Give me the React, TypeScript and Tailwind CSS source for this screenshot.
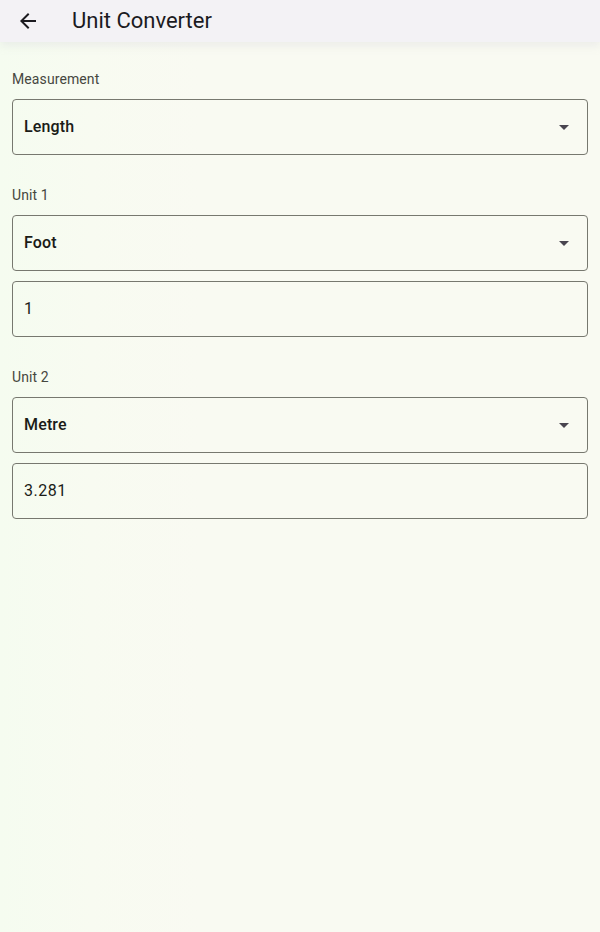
import React from "react";

function Caret() {
  return (
    <svg width="24" height="24" viewBox="0 0 24 24" className="shrink-0">
      <path d="M7 10l5 5 5-5z" fill="#49454f" />
    </svg>
  );
}

function SelectBox({ value }: { value: string }) {
  return (
    <div className="flex h-[56px] items-center justify-between rounded-[4px] border border-[#77786f] pl-[11px] pr-[11px]">
      <span
        className="text-[16px] font-normal leading-6 tracking-[0.15px] text-[#1b1c18]"
        style={{ fontFamily: "'Roboto Medium', Roboto, sans-serif" }}
      >
        {value}
      </span>
      <Caret />
    </div>
  );
}

function InputBox({ value }: { value: string }) {
  return (
    <div className="flex h-[56px] items-center rounded-[4px] border border-[#77786f] pl-[11px] pr-[11px]">
      <span className="text-[16px] font-normal leading-6 tracking-[0.5px] text-[#1b1c18]">{value}</span>
    </div>
  );
}

function Label({ children }: { children: React.ReactNode }) {
  return (
    <div className="text-[14px] leading-5 tracking-[0.1px] text-[#46473f]">{children}</div>
  );
}

export default function App() {
  return (
    <div
      className="flex min-h-[932px] w-full flex-col bg-[linear-gradient(to_right,#f5fcf0,#f8fbf1_90px,#f9faf2_200px)]"
      style={{ fontFamily: "Roboto, 'Noto Sans', sans-serif" }}
    >
      <header className="relative z-10 flex h-[42px] items-center bg-[#f3f2f5] shadow-[0_4px_8px_rgba(200,200,210,0.25)]">
        <div className="flex w-[72px] items-center pl-[16px]">
          <svg width="24" height="24" viewBox="0 0 24 24">
            <path d="M20 11H7.83l5.59-5.59L12 4l-8 8 8 8 1.41-1.41L7.83 13H20v-2z" fill="#1b1b1f" />
          </svg>
        </div>
        <h1 className="text-[22px] font-normal leading-7 text-[#1b1b1f]">Unit Converter</h1>
      </header>
      <main className="flex flex-col px-3 pt-[27px]">
        <Label>Measurement</Label>
        <div className="mt-[10px]">
          <SelectBox value="Length" />
        </div>
        <div className="mt-[30px]">
          <Label>Unit 1</Label>
        </div>
        <div className="mt-[10px] flex flex-col gap-[10px]">
          <SelectBox value="Foot" />
          <InputBox value="1" />
        </div>
        <div className="mt-[30px]">
          <Label>Unit 2</Label>
        </div>
        <div className="mt-[10px] flex flex-col gap-[10px]">
          <SelectBox value="Metre" />
          <InputBox value="3.281" />
        </div>
      </main>
    </div>
  );
}
